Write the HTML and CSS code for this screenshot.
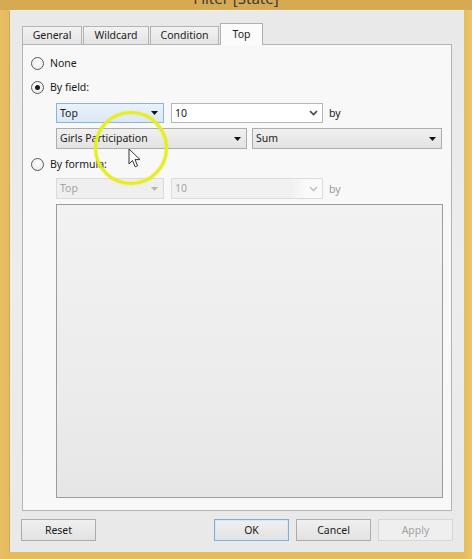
FILE: index.html
```html
<!DOCTYPE html>
<html>
<head>
<meta charset="utf-8">
<link rel="stylesheet" href="styles.css">
</head>
<body>
<div class="window">
  <div class="titlebar"><div class="title">Filter [State]</div></div>
  <div class="client">
    <div class="tabs">
      <div class="tab t-general">General</div>
      <div class="tab t-wildcard">Wildcard</div>
      <div class="tab t-condition">Condition</div>
      <div class="tab t-top active">Top</div>
    </div>
    <div class="panel">
      <div class="radio-row r-none"><span class="radio"></span><span class="label">None</span></div>
      <div class="radio-row r-field"><span class="radio checked"></span><span class="label">By field:</span></div>
      <div class="field-row row1">
        <div class="select focus w-top"><span class="val">Top</span><svg class="tri" width="7" height="4" viewBox="0 0 7 4"><path d="M0 0H7L3.5 4Z"/></svg></div>
        <div class="combo w-num"><span class="val">10</span><svg class="chev" width="9" height="6" viewBox="0 0 9 6"><path d="M1 1L4.5 4.5L8 1"/></svg></div>
        <span class="by">by</span>
      </div>
      <div class="field-row row2">
        <div class="select w-field"><span class="val">Girls Participation</span><svg class="tri" width="7" height="4" viewBox="0 0 7 4"><path d="M0 0H7L3.5 4Z"/></svg></div>
        <div class="select w-agg"><span class="val">Sum</span><svg class="tri" width="7" height="4" viewBox="0 0 7 4"><path d="M0 0H7L3.5 4Z"/></svg></div>
      </div>
      <div class="radio-row r-formula"><span class="radio"></span><span class="label">By formula:</span></div>
      <div class="field-row row3 disabled">
        <div class="select w-top"><span class="val">Top</span><svg class="tri" width="7" height="4" viewBox="0 0 7 4"><path d="M0 0H7L3.5 4Z"/></svg></div>
        <div class="combo w-num"><span class="val">10</span><span class="combo-btn"><svg class="chev" width="9" height="6" viewBox="0 0 9 6"><path d="M1 1L4.5 4.5L8 1"/></svg></span></div>
        <span class="by">by</span>
      </div>
      <div class="formula-box"></div>
    </div>
    <div class="buttons">
      <button class="btn">Reset</button>
      <span class="spacer"></span>
      <button class="btn default">OK</button>
      <button class="btn">Cancel</button>
      <button class="btn disabled-btn">Apply</button>
    </div>
  </div>
  <div class="highlight"></div>
  <svg class="cursor" width="14" height="21" viewBox="0 0 14 21"><path d="M1 1V16L4.5 12.5L7.2 18.8L9.6 17.8L7 11.6H12Z" fill="#fff" stroke="#333" stroke-width="1" stroke-linejoin="round"/></svg>
</div>
</body>
</html>
```

FILE: styles.css
```css
* { box-sizing: border-box; }
html, body { margin: 0; padding: 0; }
body {
  width: 472px;
  height: 559px;
  overflow: hidden;
  background: #e6b95c;
  font-family: "Noto Sans", "Liberation Sans", sans-serif;
  font-size: 10.5px;
  color: #1a1a1a;
}
.window {
  position: relative;
  width: 472px;
  height: 559px;
  display: flex;
  flex-direction: column;
  background: linear-gradient(90deg, #e9bd62 0, #e7ba5e 9px, #e7ba5e 463px, #eec46a 472px);
}
.titlebar {
  height: 11px;
  overflow: hidden;
  background: #d5aa52;
  text-align: center;
}
.title {
  margin-top: -9px;
  font-size: 15px;
  line-height: 15px;
  color: #3a3a3a;
}
.client {
  flex: 1;
  margin: 0 8px 7px 9px;
  padding: 12px 12px 11px 13px;
  background: linear-gradient(180deg, #e9e9e9 0%, #ededed 50%, #e9e9e9 100%);
  border-left: 1px solid #c9a96a;
  border-top: 1px solid #f2efe6;
  display: flex;
  flex-direction: column;
}
.tabs {
  height: 21px;
  display: flex;
  align-items: flex-end;
  position: relative;
  z-index: 1;
}
.tab {
  height: 18px;
  border: 1px solid #b4b4b4;
  border-bottom: none;
  background: linear-gradient(180deg, #f2f2f2, #e4e4e4);
  display: flex;
  align-items: center;
  justify-content: center;
  color: #222;
  line-height: 1;
}
.t-general { width: 60px; margin-left: -1px; }
.t-wildcard { width: 66px; margin-left: 1px; }
.t-condition { width: 69px; margin-left: 1px; }
.t-top { width: 43px; margin-left: 1px; }
.tab.active {
  height: 22px;
  margin-bottom: -1px;
  background: #fbfbfb;
  border-color: #b0b0b0;
}
.panel {
  height: 467px;
  margin-left: -1px;
  border: 1px solid #b4b4b4;
  background: #f8f8f8;
  padding: 12px 10px 12px 8px;
  display: flex;
  flex-direction: column;
}
.radio-row {
  height: 13px;
  display: flex;
  align-items: center;
}
.r-field { margin-top: 11px; }
.r-formula { margin-top: 9px; }
.radio {
  width: 13px;
  height: 13px;
  border-radius: 50%;
  border: 1px solid #5a5a5a;
  background: radial-gradient(circle at 50% 40%, #ffffff, #e6e6e6);
  display: flex;
  align-items: center;
  justify-content: center;
  flex: none;
}
.radio.checked::after {
  content: "";
  width: 5px;
  height: 5px;
  border-radius: 50%;
  background: #1b1b1b;
}
.label {
  margin-left: 6px;
  line-height: 13px;
}
.field-row {
  display: flex;
  align-items: center;
  padding-left: 25px;
}
.row1 { margin-top: 9px; height: 20px; }
.row2 { margin-top: 5px; height: 21px; }
.row3 { margin-top: 7px; height: 21px; }
.select, .combo {
  height: 100%;
  display: flex;
  align-items: center;
  justify-content: space-between;
  padding: 0 5px 0 3px;
  flex: none;
}
.select {
  border: 1px solid #adadad;
  background: linear-gradient(180deg, #f0f0f0, #e3e3e3);
}
.select.focus {
  border-color: #8cb3dc;
  background: linear-gradient(180deg, #eaf2fb, #dbe8f6);
}
.combo {
  border: 1px solid #b6b6b6;
  background: #ffffff;
  padding-right: 4px;
}
.tri { fill: #111; }
.chev { fill: none; stroke: #444; stroke-width: 1.6; }
.w-top { width: 108px; }
.w-num { width: 152px; margin-left: 7px; }
.w-field { width: 191px; }
.w-agg { width: 190px; margin-left: 5px; }
.by { margin-left: 6px; }
.val { line-height: 1; }
.disabled .select {
  border-color: #dadada;
  background: #efefef;
  color: #a6a6a6;
}
.disabled .tri { fill: #b5b5b5; }
.disabled .combo {
  border-color: #dcdcdc;
  background: linear-gradient(90deg, #f1f1f1 0, #f1f1f1 80%, #fafafa 90%);
  color: #a6a6a6;
}
.disabled .chev { stroke: #c2c2c2; }
.disabled .by { color: #9a9a9a; }
.combo-btn { display: flex; align-items: center; }
.formula-box {
  flex: 1;
  margin-top: 5px;
  margin-left: 25px;
  width: 387px;
  border: 1px solid #9c9c9c;
  background: linear-gradient(180deg, #f2f2f2, #ebebeb 70%, #e6e6e6);
}
.buttons {
  margin-top: 8px;
  height: 22px;
  display: flex;
  margin-left: -2px;
  margin-right: -1px;
}
.spacer { flex: 1; }
.btn {
  width: 75px;
  height: 22px;
  margin: 0;
  padding: 0;
  border: 1px solid #acacac;
  background: linear-gradient(180deg, #f0f0f0, #e2e2e2);
  font-family: inherit;
  font-size: 10.5px;
  color: #1a1a1a;
}
.btn + .btn { margin-left: 7px; }
.btn.default {
  border-color: #7faedb;
  box-shadow: inset 0 0 0 1px #d7e6f5;
}
.btn.disabled-btn {
  border-color: #d6d6d6;
  background: #efefef;
  color: #a3a3a3;
}
.highlight {
  position: absolute;
  left: 94px;
  top: 111px;
  width: 74px;
  height: 74px;
  border-radius: 50%;
  border: 3px solid #e6ee22;
  box-shadow: 0 0 2px rgba(233, 240, 40, 0.8), inset 0 0 2px rgba(233, 240, 40, 0.8);
}
.cursor {
  position: absolute;
  left: 128px;
  top: 148px;
}
```
